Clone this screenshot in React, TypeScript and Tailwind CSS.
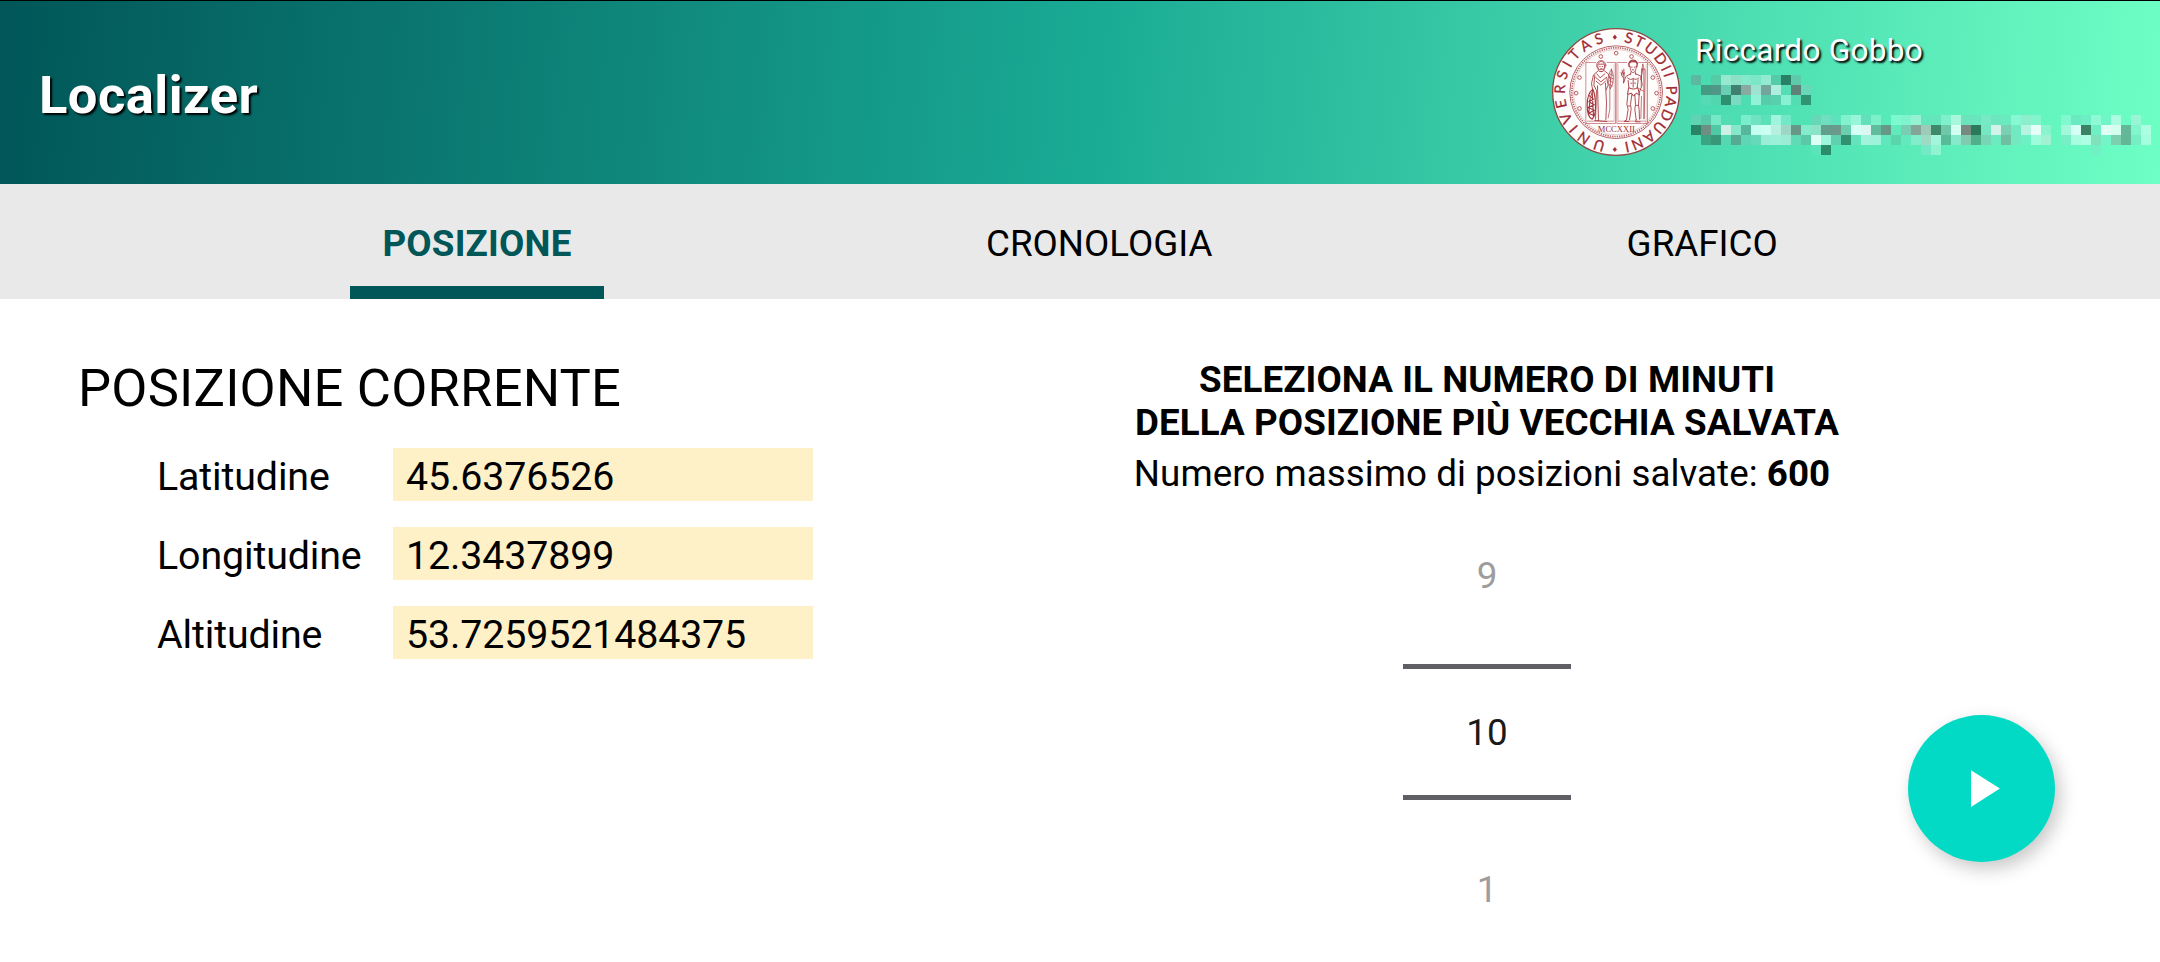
const CELL = 10;

type MosaicRow = { y: number; from: number; cells: (string | null)[] };

const MOSAIC: MosaicRow[] = [
  { y: 0, from: 0, cells: ["5ab9a0", null, "56cba8", "96e8cf", "8be0c6", "82e9cb", "7be7c6", "92ebd1", "55cca9", "2a8064", "5ecaab"] },
  { y: 1, from: 1, cells: ["449b81", "4f9885", "68cfb4", "3f8070", "88aaa0", "9de3d1", "73a59d", "adeedd", "55ddb5", "5d8379", "69d8b8"] },
  { y: 2, from: 1, cells: ["55dab5", "52d6b0", "2f9070", "79dcc1", "4edcb2", "92f2d7", "57ccab", "58d0ae", "88f0d3", "53ddb3", "309473"] },
  {
    y: 4,
    from: 0,
    cells: [
      "5fd3b3", "57c9a9", "75e9c6", "53dbb4", null, "79edcc", "70e2c1", "5ce0b7", "a0f3dc", "71e8c6", null, null,
      "66d8b8", "6fdfbf", "5ce3bd", "83f0ce", "97f6d8", "62dfbb", "7cf0cb", null, "7cf9ce", "80f2cd", "96f2d3",
      "63e6bb", "63e6bc", "7ff0cb", "a8f7dd", "6be3bb", "68e5bc", "77e9c4", "6de5be", "69eabf", "87f8d3", "8deecb",
      "82f5cd", null, null, "80f9d0", "69eac0", "6feec5", "8cfbd4", "70f4c8", "abfde2", null, "99f6d5",
    ],
  },
  {
    y: 5,
    from: 0,
    cells: [
      "298465", "6d8e82", "4fc9a3", "cdf0e4", "85e8ca", "58b79b", "c5fff0", "cbfff1", "b7f0df", "9fd7c6", "659887", "84ebcc",
      "8ce3c8", "619f8c", "6b9a8b", "69cfad", "d4fff4", "daf8ef", "5fbd9d", "679886", "61eabb", "79cdb3", "83a699",
      "9ecab9", "3d8a6b", "6fc8aa", "d2fff2", "778a80", "2b795b", "77e7c3", "d4f3e8", "7ad0b3", "71e9c1", "b6f3e0",
      "e5fff8", "87f5ce", null, "a1f9da", "d5fff4", "3c8265", "70eec4", "dffff5", "d4fff0", "63b899", "82f5cc", "acffe1",
    ],
  },
  {
    y: 6,
    from: 1,
    cells: [
      "3ba583", "369878", "55d8b1", "55ab91", "5fd6b4", "65d9b9", "9aeed6", "9bf0d8", "9aecd5", "61dab6", "5bc8a6",
      "dbfff5", "9bf6da", "61d0ae", "309271", "64e2bb", "a1f3da", "9df3d9", "5fe8bc", "5bd5ac", "64e8bd", "83eccb",
      "9ddbc5", "a1f6dc", "57bd98", "87e9cb", "80ccb0", "50b08c", "76d6b5", "6ceac0", "70bfa3", "73e8c1", "6cf1c4",
      "9dfcdc", "a1f2d3", null, "78eec6", "a7fde0", "adffe3", "80e2bb", "74f4c8", "7bd0b0", "63b697", "77efc5", "a3ffdd",
    ],
  },
  { y: 7, from: 12, cells: ["5be3ba", "2b8c6a"] },
  { y: 7, from: 23, cells: ["75e8c6", "90f4d3"] },
  { y: 7, from: 40, cells: ["71efc5"] },
];

function Mosaic() {
  return (
    <svg width="460" height="80" viewBox="0 0 460 80" shapeRendering="crispEdges" aria-hidden="true">
      {MOSAIC.map((row) =>
        row.cells.map((c, i) =>
          c ? (
            <rect
              key={`${row.y}-${row.from + i}`}
              x={(row.from + i) * CELL}
              y={row.y * CELL}
              width={CELL}
              height={CELL}
              fill={`#${c}`}
            />
          ) : null,
        ),
      )}
    </svg>
  );
}

const STARS = [
  [260, 160], [214, 170], [306, 170], [150, 233], [140, 280], [150, 326], [370, 233], [381, 280], [370, 326],
];

function Seal() {
  return (
    <svg className="size-32 shrink-0" viewBox="67.5 84.5 384 384" fill="none" stroke="#a5353c">
      <circle cx="259.5" cy="276.5" r="190" fill="#fffdfc" stroke="#8f4a45" strokeWidth="4" />
      <circle cx="260" cy="277" r="139" strokeWidth="3" stroke="#b9666a" />
      <circle cx="260" cy="277" r="133" strokeWidth="5" strokeDasharray="4 3" stroke="#b9666a" />
      <circle cx="260" cy="277" r="128" strokeWidth="1.5" stroke="#cf9496" />
      <path id="seal-left" d="M229 426 A152 152 0 0 1 250 125" stroke="none" />
      <path id="seal-right" d="M283 127 A152 152 0 0 1 262 429" stroke="none" />
      <g fill="#a02a33" stroke="#a02a33" strokeWidth="0.8" className="font-[Lato,sans-serif]" fontSize="44">
        <text>
          <textPath href="#seal-left" textLength="414" lengthAdjust="spacing">UNIVERSITAS</textPath>
        </text>
        <text>
          <textPath href="#seal-right" textLength="428" lengthAdjust="spacing">STUDII PADUANI</textPath>
        </text>
        <path d="M256 105l6 7-6 7-6-7zM256 442l6 7-6 7-6-7z" />
      </g>
      <text
        x="205"
        y="396"
        textLength="111"
        lengthAdjust="spacingAndGlyphs"
        fontSize="22"
        fill="#9c2b32"
        stroke="none"
        className="font-['Liberation_Serif',serif]"
      >
        MCCXXII
      </text>
      {STARS.map(([x, y]) => (
        <circle key={`${x}-${y}`} cx={x} cy={y} r="5.5" strokeWidth="3" stroke="#b55a5e" />
      ))}
      <g strokeWidth="2" stroke="#b9585d">
        <path d="M199 188H169V371H258V188H232M262 371V188H293M326 188H354V371H262M173 364h80M266 364h83" />
        <path d="M254 192V366M266 192V366M350 192V368" strokeWidth="1" />
      </g>
      <g strokeWidth="2.6" strokeLinecap="round" strokeLinejoin="round">
        <circle cx="215" cy="196" r="14" strokeWidth="2" />
        <path d="M206 208c-3-14 0-23 9-23s12 9 9 23l-4 7h-9zM208 193h14M211 200h1M218 200h1M213 207h5" />
        <path d="M206 213l-14 12-6 26 4 22-8 20M225 213l12 10 6 18M196 226l-3 30 8 16-3 86M202 222l10 12 14-12M198 232l16 14 18-14M200 244l14 12 14-12M204 258l3 104M228 250l3 60-2 50M196 362l36 3M232 236l4 20-6 14" />
        <path d="M246 208c-9 12-12 30-8 46l4 14c10-14 13-42 4-60zM241 222l9 5M239 232l12 5M239 243l11 5M240 254l8 4M246 212l-4 52M241 268v60l-5 26" strokeWidth="2" />
        <path d="M190 268c-10 8-17 26-17 48 0 22 6 38 15 42 8-8 11-26 10-46-1-20-3-34-8-44zM180 288l12 10-14 8 16 9-18 8 18 8-16 9 14 7M188 278l4 70M182 296l-4 40" strokeWidth="3.5" />
      </g>
      <g strokeWidth="2.6" strokeLinecap="round" strokeLinejoin="round">
        <path d="M299 200c-3-12 3-19 12-19s15 8 11 20M298 190c6-6 20-6 26 0" strokeWidth="4" />
        <path d="M302 200c0 10 3 18 9 18s9-8 9-18M306 202h2M314 202h2M309 210h4M305 216l-2 8M317 216l2 8" />
        <path d="M303 222l-14 8-7 20 2-32M278 212l3 14M283 208v16M275 218l2 10 5 6M319 222l15 7 4 26-9 24M334 240l6-34M294 234c6 6 12 6 17 2 6 4 12 3 17-2M296 242l2 22M326 240l-3 24M311 238v24M304 250h3M315 250h3" />
        <path d="M299 264c8 5 18 5 25 0M297 266l-3 18 12-4 6 9 8-9 10 5-5-21" strokeWidth="3" />
        <path d="M295 286l-3 28 4 14-5 32M307 284l-4 30 2 14-5 32M316 284l2 30-2 14 4 32M329 284l-2 32 2 14 1 28M291 360l-7 5h14M320 360l-2 6h14M296 318l5 1M319 316l6 1" />
        <path d="M338 205l2-13 3 13v152M336 208h10M336 208l-1 50M347 210l-3 146M336 290l-2 66M328 266l14 8" strokeWidth="2" />
      </g>
    </svg>
  );
}

function Header() {
  return (
    <header className="flex h-[184px] items-start justify-between border-t border-black bg-[linear-gradient(94.84deg,#015658_0%,#19aa94_50%,#6effc5_100%)]">
      <h1 className="mt-[63px] ml-[39px] text-[52.5px] leading-[62px] font-bold tracking-[0.45px] text-white [text-shadow:2px_2px_2px_#000000]">
        Localizer
      </h1>
      <div className="flex items-start pt-[27px] pr-[9px]">
        <Seal />
        <div className="ml-[11px] flex flex-col">
          <p className="ml-[4px] h-[47px] pt-[4px] text-[31.5px] leading-[37px] tracking-[0.3px] text-white [text-shadow:2px_2px_2px_#000000]">
            Riccardo Gobbo
          </p>
          <Mosaic />
        </div>
      </div>
    </header>
  );
}

function Tabs() {
  return (
    <nav className="flex h-[115px] bg-[#e9e9e9] pt-[38px] text-[36.75px] leading-[44px]">
      <div className="ml-[350px] flex w-[254px] flex-col items-center justify-between font-bold tracking-[0.2px] text-[#015658]">
        <span>POSIZIONE</span>
        <span className="h-[13px] w-full bg-[#015658]" />
      </div>
      <span className="ml-[382px]">CRONOLOGIA</span>
      <span className="ml-[414px]">GRAFICO</span>
    </nav>
  );
}

const FIELDS = [
  ["Latitudine", "45.6376526"],
  ["Longitudine", "12.3437899"],
  ["Altitudine", "53.7259521484375"],
];

function CurrentPosition() {
  return (
    <section className="w-[1080px] pt-[58px] pl-[78px]">
      <h2 className="text-[52.5px] leading-[62px] tracking-[0.2px]">POSIZIONE CORRENTE</h2>
      <dl className="mt-[29px] ml-[79px] grid grid-cols-[236px_420px] gap-y-[26px] text-[39.375px] leading-[53px] tracking-[-0.13px]">
        {FIELDS.map(([label, value]) => (
          <div key={label} className="contents">
            <dt className="h-[53px] pt-[2px]">{label}</dt>
            <dd className="h-[53px] bg-[#fef0c7] pt-[2px] pl-[13px]">{value}</dd>
          </div>
        ))}
      </dl>
    </section>
  );
}

function MinutesPicker() {
  return (
    <section className="flex w-[814px] flex-col items-center pt-[59px] text-[36.75px] leading-[43px]">
      <h2 className="text-center font-bold tracking-[0.09px]">
        SELEZIONA IL NUMERO DI MINUTI
        <br />
        DELLA POSIZIONE PIÙ VECCHIA SALVATA
      </h2>
      <p className="mt-[8px] mr-[10px] tracking-[0.04px]">
        Numero massimo di posizioni salvate: <b>600</b>
      </p>
      <div className="mt-[59px] flex w-[168px] flex-col items-center text-[#9d9d9d]">
        <span>9</span>
        <div className="mt-[67px] flex h-[136px] w-full items-center justify-center border-y-[5px] border-[#605f66] text-[#1a1a1a]">
          10
        </div>
        <span className="mt-[68px]">1</span>
      </div>
    </section>
  );
}

export default function App() {
  return (
    <div className="h-[962px] w-[2160px] overflow-hidden bg-white font-[Roboto,sans-serif] text-black">
      <Header />
      <Tabs />
      <main className="flex">
        <CurrentPosition />
        <MinutesPicker />
        <button
          aria-label="Avvia"
          className="mt-[416px] ml-[14px] flex size-[147px] items-center justify-center rounded-full bg-[#03dac5] shadow-[5px_7px_18px_rgba(0,0,0,0.22)]"
        >
          <svg className="size-[63px]" viewBox="0 0 24 24" fill="#ffffff">
            <path d="M8 5v14l11-7z" />
          </svg>
        </button>
      </main>
    </div>
  );
}
